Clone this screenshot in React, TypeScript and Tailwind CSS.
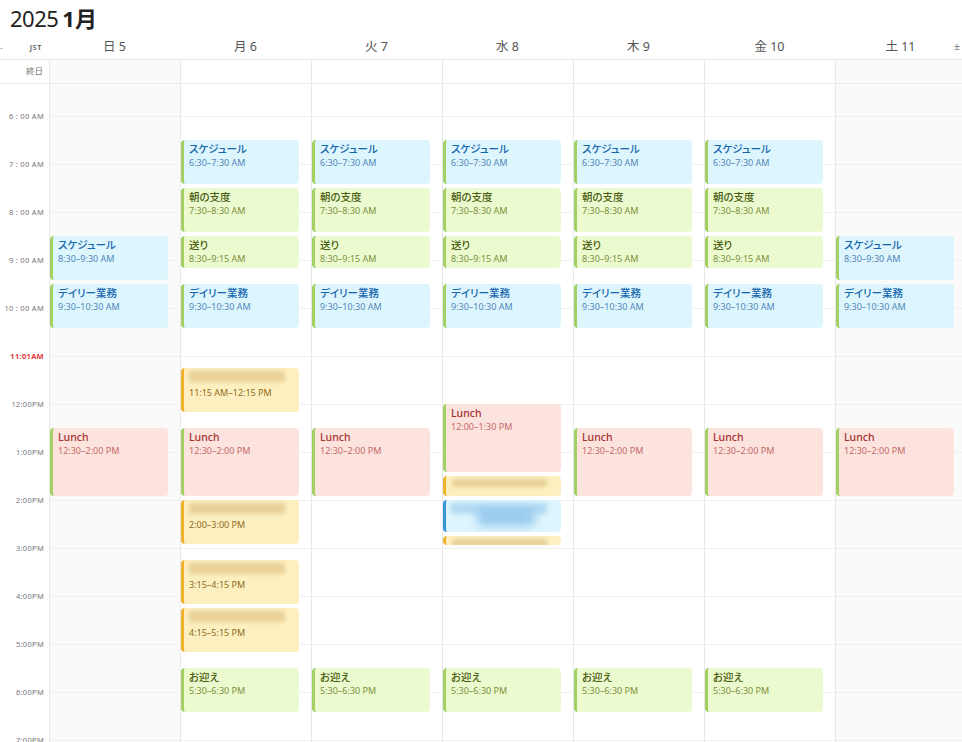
import React from 'react'

type Kind = 'blue' | 'green' | 'red' | 'yellow' | 'sky'

type CalEvent = {
  day: number
  start: number
  end: number
  title?: string
  kind: Kind
  bar?: 'blue' | 'green' | 'yellow'
  blurTitle?: boolean
  hideTime?: boolean
  time: string
}

const DAYS = ['日 5', '月 6', '火 7', '水 8', '木 9', '金 10', '土 11']

const HOURS = [
  { label: '6 : 00 AM' },
  { label: '7 : 00 AM' },
  { label: '8 : 00 AM' },
  { label: '9 : 00 AM' },
  { label: '10 : 00 AM' },
  { label: '11:01AM', now: true },
  { label: '12:00PM' },
  { label: '1:00PM' },
  { label: '2:00PM' },
  { label: '3:00PM' },
  { label: '4:00PM' },
  { label: '5:00PM' },
  { label: '6:00PM' },
  { label: '7:00PM' },
]

const morning = (day: number): CalEvent[] => [
  { day, start: 6.5, end: 7.5, title: 'スケジュール', kind: 'blue', bar: 'green', time: '6:30–7:30 AM' },
  { day, start: 7.5, end: 8.5, title: '朝の支度', kind: 'green', bar: 'green', time: '7:30–8:30 AM' },
  { day, start: 8.5, end: 9.25, title: '送り', kind: 'green', bar: 'green', time: '8:30–9:15 AM' },
  { day, start: 9.5, end: 10.5, title: 'デイリー業務', kind: 'blue', bar: 'green', time: '9:30–10:30 AM' },
]

const weekend = (day: number): CalEvent[] => [
  { day, start: 8.5, end: 9.5, title: 'スケジュール', kind: 'blue', bar: 'green', time: '8:30–9:30 AM' },
  { day, start: 9.5, end: 10.5, title: 'デイリー業務', kind: 'blue', bar: 'green', time: '9:30–10:30 AM' },
  { day, start: 12.5, end: 14, title: 'Lunch', kind: 'red', bar: 'green', time: '12:30–2:00 PM' },
]

const lunch = (day: number): CalEvent => ({
  day, start: 12.5, end: 14, title: 'Lunch', kind: 'red', bar: 'green', time: '12:30–2:00 PM',
})

const pickup = (day: number): CalEvent => ({
  day, start: 17.5, end: 18.5, title: 'お迎え', kind: 'green', bar: 'green', time: '5:30–6:30 PM',
})

const EVENTS: CalEvent[] = [
  ...weekend(0),
  ...morning(1),
  { day: 1, start: 11.25, end: 12.25, kind: 'yellow', bar: 'yellow', blurTitle: true, time: '11:15 AM–12:15 PM' },
  lunch(1),
  { day: 1, start: 14, end: 15, kind: 'yellow', bar: 'yellow', blurTitle: true, time: '2:00–3:00 PM' },
  { day: 1, start: 15.25, end: 16.25, kind: 'yellow', bar: 'yellow', blurTitle: true, time: '3:15–4:15 PM' },
  { day: 1, start: 16.25, end: 17.25, kind: 'yellow', bar: 'yellow', blurTitle: true, time: '4:15–5:15 PM' },
  pickup(1),
  ...morning(2),
  lunch(2),
  pickup(2),
  ...morning(3),
  { day: 3, start: 12, end: 13.5, title: 'Lunch', kind: 'red', bar: 'green', time: '12:00–1:30 PM' },
  { day: 3, start: 13.5, end: 14, kind: 'yellow', bar: 'yellow', blurTitle: true, hideTime: true, time: '' },
  { day: 3, start: 14, end: 14.75, kind: 'sky', bar: 'blue', blurTitle: true, hideTime: true, time: '' },
  { day: 3, start: 14.75, end: 15, kind: 'yellow', bar: 'yellow', blurTitle: true, hideTime: true, time: '' },
  pickup(3),
  ...morning(4),
  lunch(4),
  pickup(4),
  ...morning(5),
  lunch(5),
  pickup(5),
  ...weekend(6),
]

const kindStyles: Record<Kind, { box: string; title: string; time: string; blur: string }> = {
  blue: { box: 'bg-[#ddf5fd]', title: 'text-[#1766ad]', time: 'text-[#5286b8]', blur: 'bg-[#9cc9ea]' },
  sky: { box: 'bg-[#ddf5fd]', title: 'text-[#1766ad]', time: 'text-[#5286b8]', blur: 'bg-[#a9d4f2]' },
  green: { box: 'bg-[#ebfbcf]', title: 'text-[#4a5c0f]', time: 'text-[#7d8f3c]', blur: 'bg-[#c9dc9a]' },
  red: { box: 'bg-[#fde3dd]', title: 'text-[#a63030]', time: 'text-[#c46a6a]', blur: 'bg-[#e8b0a8]' },
  yellow: { box: 'bg-[#fdefbf]', title: 'text-[#7a5c12]', time: 'text-[#8c6c22]', blur: 'bg-[#e2c98e]' },
}

const barStyles = {
  green: 'border-[#a2d063]',
  yellow: 'border-[#efb22c]',
  blue: 'border-[#3597d8]',
}

const HOUR_PX = 48
const FIRST_LINE = 32 // px from top of body to the 6:00 line

function EventBlock({ ev }: { ev: CalEvent }) {
  const s = kindStyles[ev.kind]
  const top = FIRST_LINE + (ev.start - 6) * HOUR_PX
  const height = Math.max((ev.end - ev.start) * HOUR_PX - 4, 9)
  const small = height < 24

  return (
    <div
      className={`absolute left-0 right-[12px] rounded-[4px] border-l-[3px] overflow-hidden ${s.box} ${barStyles[ev.bar ?? 'green']} ${small ? 'px-[6px] pt-[3px]' : 'pl-[5px] pr-[6px] pt-[2px]'}`}
      style={{ top, height }}
    >
      {ev.blurTitle ? (
        <div className={`${small ? 'h-[8px]' : 'h-[11px] mt-[1px] mb-[5px]'} w-[92%] rounded-[2px] blur-[2px] opacity-80 ${s.blur}`} />
      ) : (
        <div className={`text-[10.5px] leading-[14px] font-medium ${s.title}`}>{ev.title}</div>
      )}
      {ev.kind === 'sky' && (
        <div className="absolute left-[30px] top-[10px] h-[16px] w-[60px] rounded-full bg-[#7bb8e8] blur-[5px] opacity-70" />
      )}
      {!ev.hideTime && (
        <div className={`mt-[1px] text-[9px] leading-[12px] ${s.time}`}>{ev.time}</div>
      )}
    </div>
  )
}

export default function App() {
  const shaded = (i: number) => i === 0 || i === 6

  return (
    <div
      className="relative w-[962px] h-[742px] overflow-hidden bg-white text-[#444] [font-feature-settings:'palt']"
      style={{ fontFamily: '"Noto Sans", "Noto Sans CJK JP", sans-serif' }}
    >
      {/* Month title */}
      <div className="h-[36px] pl-[10px] flex items-center">
        <span className="text-[22px] leading-none text-[#222] tracking-[-0.5px]">2025</span>
        <span className="ml-[4px] text-[22px] leading-none font-bold text-[#222]">1月</span>
      </div>

      {/* Day header */}
      <div className="flex h-[24px] border-b border-[#e6e6e6]">
        <div className="w-[49px] shrink-0 flex items-center justify-between pr-[7px]">
          <span className="text-[9px] text-[#999]">-</span>
          <span className="text-[7.5px] font-semibold text-[#555] tracking-[0.5px]">JST</span>
        </div>
        {DAYS.map((d) => (
          <div key={d} className="w-[131px] shrink-0 flex items-center justify-center text-[12.5px] text-[#555]">
            {d}
          </div>
        ))}
      </div>
      <span className="absolute right-[2px] top-[38px] text-[11px] text-[#888]">±</span>

      {/* All-day row */}
      <div className="flex h-[24px] border-b border-[#ececec]">
        <div className="w-[49px] shrink-0 flex items-center justify-end pr-[6px] text-[8.5px] text-[#777]">終日</div>
        {DAYS.map((d, i) => (
          <div
            key={d}
            className={`w-[131px] shrink-0 border-l border-[#e8e8e8] ${shaded(i) ? 'bg-[#fafafa]' : ''}`}
          />
        ))}
      </div>

      {/* Time grid */}
      <div className="flex h-[658px]">
        <div className="w-[49px] shrink-0 pt-[26px] pr-[5px] flex flex-col items-end">
          {HOURS.map((h) => (
            <div
              key={h.label}
              className={`h-[48px] shrink-0 text-[7.5px] leading-[12px] tracking-[0.3px] ${h.now ? 'text-[#e23b3b] font-bold' : 'text-[#777]'}`}
            >
              {h.label}
            </div>
          ))}
        </div>
        {DAYS.map((d, i) => (
          <div
            key={d}
            className={`relative w-[131px] shrink-0 border-l border-[#e8e8e8] ${shaded(i) ? 'bg-[#fafafa]' : ''}`}
          >
            <div className="h-[33px] border-b border-[#f0f0f0]" />
            {HOURS.slice(1).map((h) => (
              <div key={h.label} className="h-[48px] border-b border-[#f0f0f0]" />
            ))}
            {EVENTS.filter((e) => e.day === i).map((e, k) => (
              <EventBlock key={k} ev={e} />
            ))}
          </div>
        ))}
      </div>
    </div>
  )
}
